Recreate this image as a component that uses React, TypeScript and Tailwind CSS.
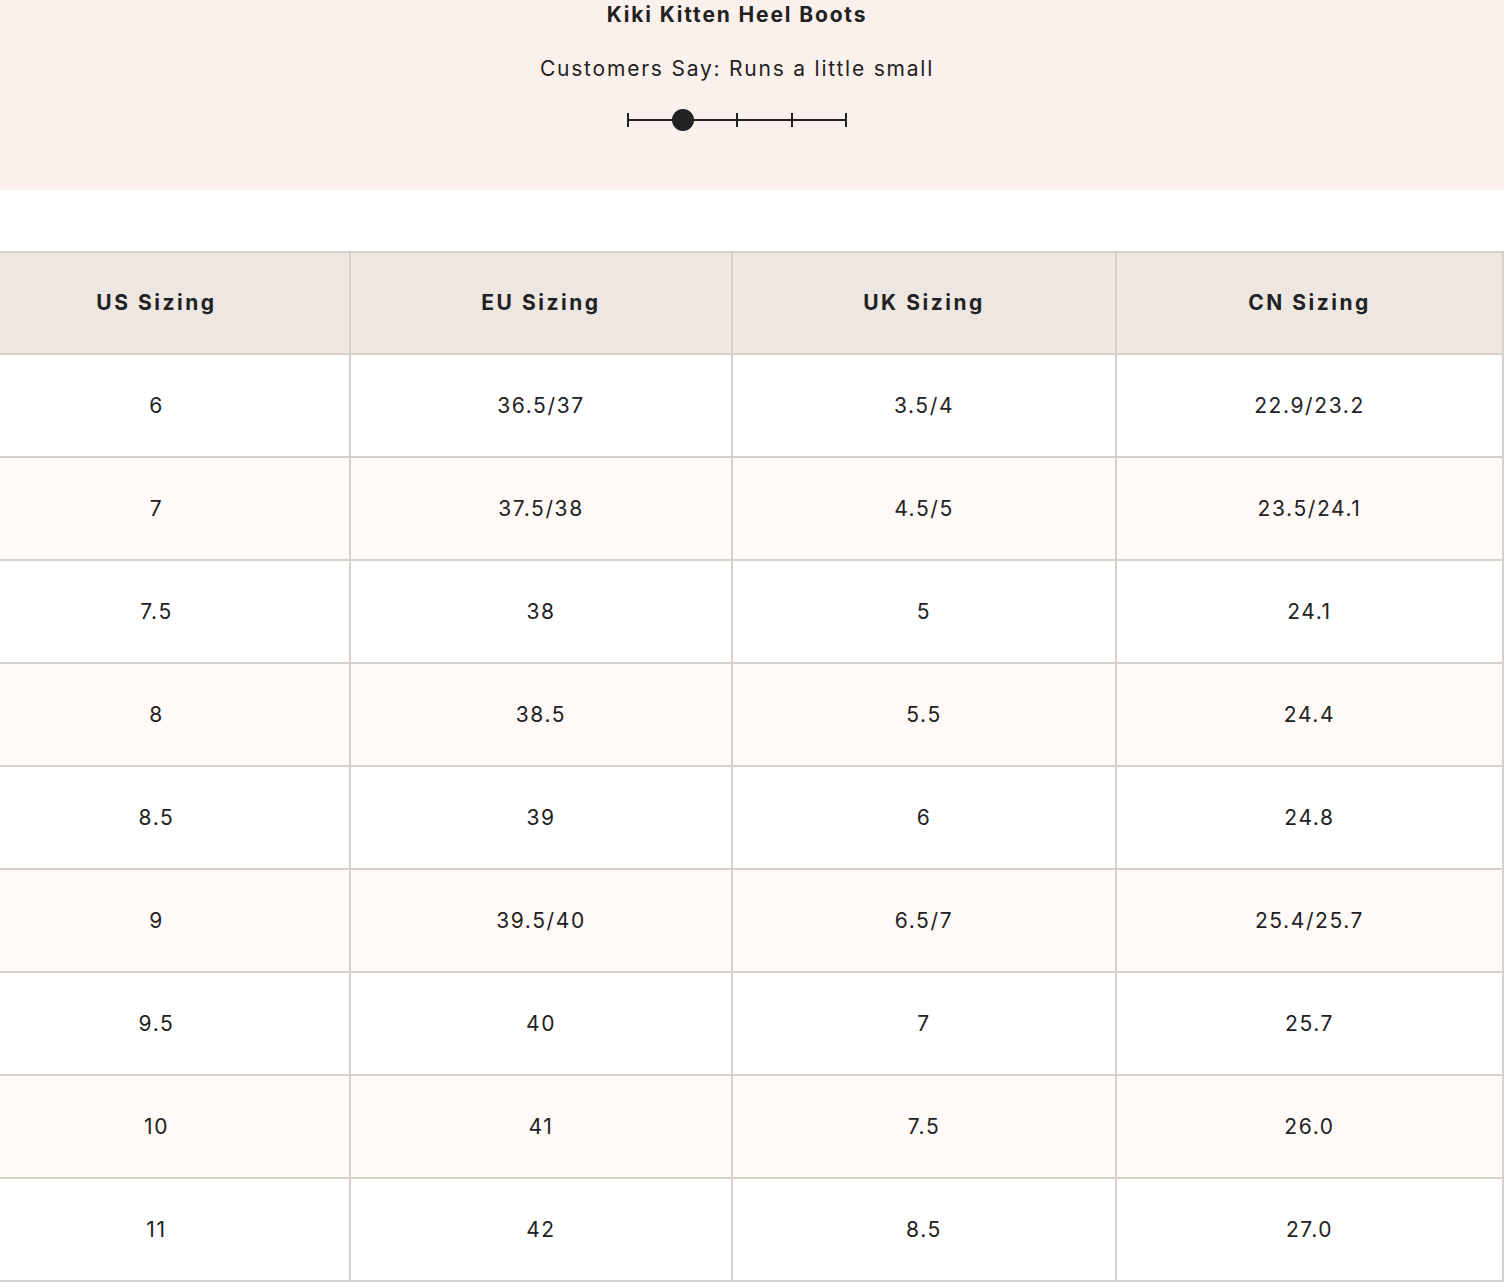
import React from "react"

const headers = ["US Sizing", "EU Sizing", "UK Sizing", "CN Sizing"]

const rows = [
  ["6", "36.5/37", "3.5/4", "22.9/23.2"],
  ["7", "37.5/38", "4.5/5", "23.5/24.1"],
  ["7.5", "38", "5", "24.1"],
  ["8", "38.5", "5.5", "24.4"],
  ["8.5", "39", "6", "24.8"],
  ["9", "39.5/40", "6.5/7", "25.4/25.7"],
  ["9.5", "40", "7", "25.7"],
  ["10", "41", "7.5", "26.0"],
  ["11", "42", "8.5", "27.0"],
]

const cols = "grid grid-cols-[351px_382px_384px_387px]"

function FitScale() {
  return (
    <svg width="224" height="26" viewBox="0 0 224 26" className="mt-[28px]">
      <line x1="3" y1="13" x2="221" y2="13" stroke="#222" strokeWidth="2" />
      {[3, 112, 167, 221].map((x) => (
        <line key={x} x1={x} y1="6" x2={x} y2="20" stroke="#222" strokeWidth="2" />
      ))}
      <circle cx="58" cy="13" r="11" fill="#222" />
    </svg>
  )
}

export default function App() {
  return (
    <div className="w-[1504px] bg-white text-[#222] font-['Inter',sans-serif]">
      <div className="h-[190px] bg-[#fbf1ec] flex flex-col items-center pr-[30px]">
        <h1 className="text-[21px] font-bold leading-none tracking-[0.088em] mt-[4px]">Kiki Kitten Heel Boots</h1>
        <p className="text-[21px] leading-none tracking-[0.085em] mt-[33px]">Customers Say: Runs a little small</p>
        <FitScale />
      </div>

      <div className="mt-[61px] border-t-2 border-[#d7d1cc]">
        <div className={`${cols} h-[102px] bg-[#ede6e1] border-b-2 border-[#d7d1cc]`}>
          {headers.map((h, j) => (
            <div
              key={h}
              className={`flex items-center justify-center border-r-2 border-[#d7d1cc] text-[21px] font-bold tracking-[0.12em] ${j === 0 ? "pr-[36px]" : ""}`}
            >
              {h}
            </div>
          ))}
        </div>
        {rows.map((r, i) => (
          <div
            key={i}
            className={`${cols} h-[103px] border-b-2 border-[#d7d1cc] ${i % 2 === 1 ? "bg-[#fff9f7]" : "bg-white"}`}
          >
            {r.map((c, j) => (
              <div
                key={j}
                className={`flex items-center justify-center border-r-2 border-[#d7d1cc] text-[21px] tracking-[0.076em] ${j === 0 ? "pr-[36px]" : ""}`}
              >
                {c}
              </div>
            ))}
          </div>
        ))}
      </div>
    </div>
  )
}
